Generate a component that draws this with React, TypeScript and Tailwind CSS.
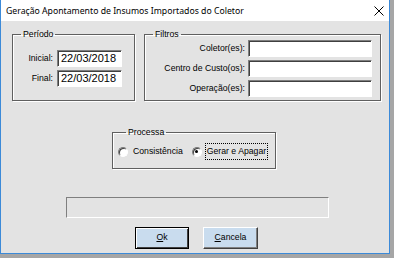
import React from "react";

const inputCls =
  "h-[17px] bg-white border border-t-[#7f7f7f] border-l-[#7f7f7f] border-b-white border-r-white shadow-[inset_1px_1px_0_#404040] font-['Liberation_Sans',Arial,sans-serif] text-[11px] leading-[15px] text-black pl-[3px]";

function Radio({ checked }: { checked?: boolean }) {
  return (
    <span className="relative w-[10px] h-[10px] rounded-full bg-white border border-t-[#7a7a7a] border-l-[#7a7a7a] border-b-white border-r-white shadow-[inset_1px_1px_0_#404040] flex items-center justify-center">
      {checked && <span className="w-[3px] h-[3px] rounded-full bg-black" />}
    </span>
  );
}

export default function App() {
  return (
    <div className="w-[394px] h-[258px] bg-[#a6a6a6] font-['Liberation_Sans',Arial,sans-serif] text-[8.7px] text-black">
      <div className="w-[390px] h-[254px] bg-[#e3e3e3] border-l border-r border-b border-[#3c8ad8] flex flex-col">
        <div className="h-[21px] bg-white flex items-center pl-[5px] pr-[5px] shrink-0">
          <span className="font-['Noto_Sans',sans-serif] text-[8.7px] leading-[12px] text-black">
            Geração Apontamento de Insumos Importados do Coletor
          </span>
          <svg className="ml-auto" width="10" height="10" viewBox="0 0 10 10">
            <path d="M0.5 0.5 L9.5 9.5 M9.5 0.5 L0.5 9.5" stroke="#000" strokeWidth="1" />
          </svg>
        </div>

        <div className="flex pt-[8px] pl-[11px] gap-[9px]">
          <fieldset className="w-[123px] h-[72px] border border-[#5f5f5f] shadow-[1px_1px_0_#fff,inset_1px_1px_0_#fff] pt-[11px]">
            <legend className="ml-[8px] px-[2px] leading-[10px]">Período</legend>
            <div className="grid grid-cols-[40px_65px] gap-x-[4px] gap-y-[3px] items-center">
              <span className="text-right">Inicial:</span>
              <div className={inputCls}>22/03/2018</div>
              <span className="text-right">Final:</span>
              <div className={inputCls}>22/03/2018</div>
            </div>
          </fieldset>
          <fieldset className="w-[237px] h-[72px] border border-[#5f5f5f] shadow-[1px_1px_0_#fff,inset_1px_1px_0_#fff] pt-[1px]">
            <legend className="ml-[8px] px-[2px] leading-[10px]">Filtros</legend>
            <div className="grid grid-cols-[100px_124px] gap-x-[3px] gap-y-[3px] items-center">
              <span className="text-right">Coletor(es):</span>
              <div className={inputCls} />
              <span className="text-right">Centro de Custo(os):</span>
              <div className={inputCls} />
              <span className="text-right">Operação(es):</span>
              <div className={inputCls} />
            </div>
          </fieldset>
        </div>

        <fieldset className="ml-[111px] mt-[26px] w-[164px] h-[42px] border border-[#5f5f5f] shadow-[1px_1px_0_#fff,inset_1px_1px_0_#fff] pt-[6px] pl-[5px]">
          <legend className="ml-[8px] px-[2px] leading-[10px]">Processa</legend>
          <div className="flex items-center">
            <Radio />
            <span className="ml-[5px]">Consistência</span>
            <span className="ml-[9px]"><Radio checked /></span>
            <span className="ml-[3px] border border-dotted border-black px-[1px] leading-[15px]">Gerar e Apagar</span>
          </div>
        </fieldset>

        <div className="ml-[65px] mt-[28px] w-[263px] h-[21px] border border-t-[#7f7f7f] border-l-[#7f7f7f] border-b-white border-r-white" />

        <div className="flex ml-[134px] mt-[9px] gap-[14px]">
          <div className="w-[54px] h-[22px] bg-[#c9dcee] border border-black shadow-[inset_1px_1px_0_#fff,inset_-1px_-1px_0_#404040] flex items-center justify-center">
            <span><u>O</u>k</span>
          </div>
          <div className="w-[55px] h-[22px] bg-[#c9dcee] border border-t-white border-l-white border-b-[#404040] border-r-[#404040] shadow-[inset_-1px_-1px_0_#808080] flex items-center justify-center">
            <span><u>C</u>ancela</span>
          </div>
        </div>
      </div>
    </div>
  );
}
